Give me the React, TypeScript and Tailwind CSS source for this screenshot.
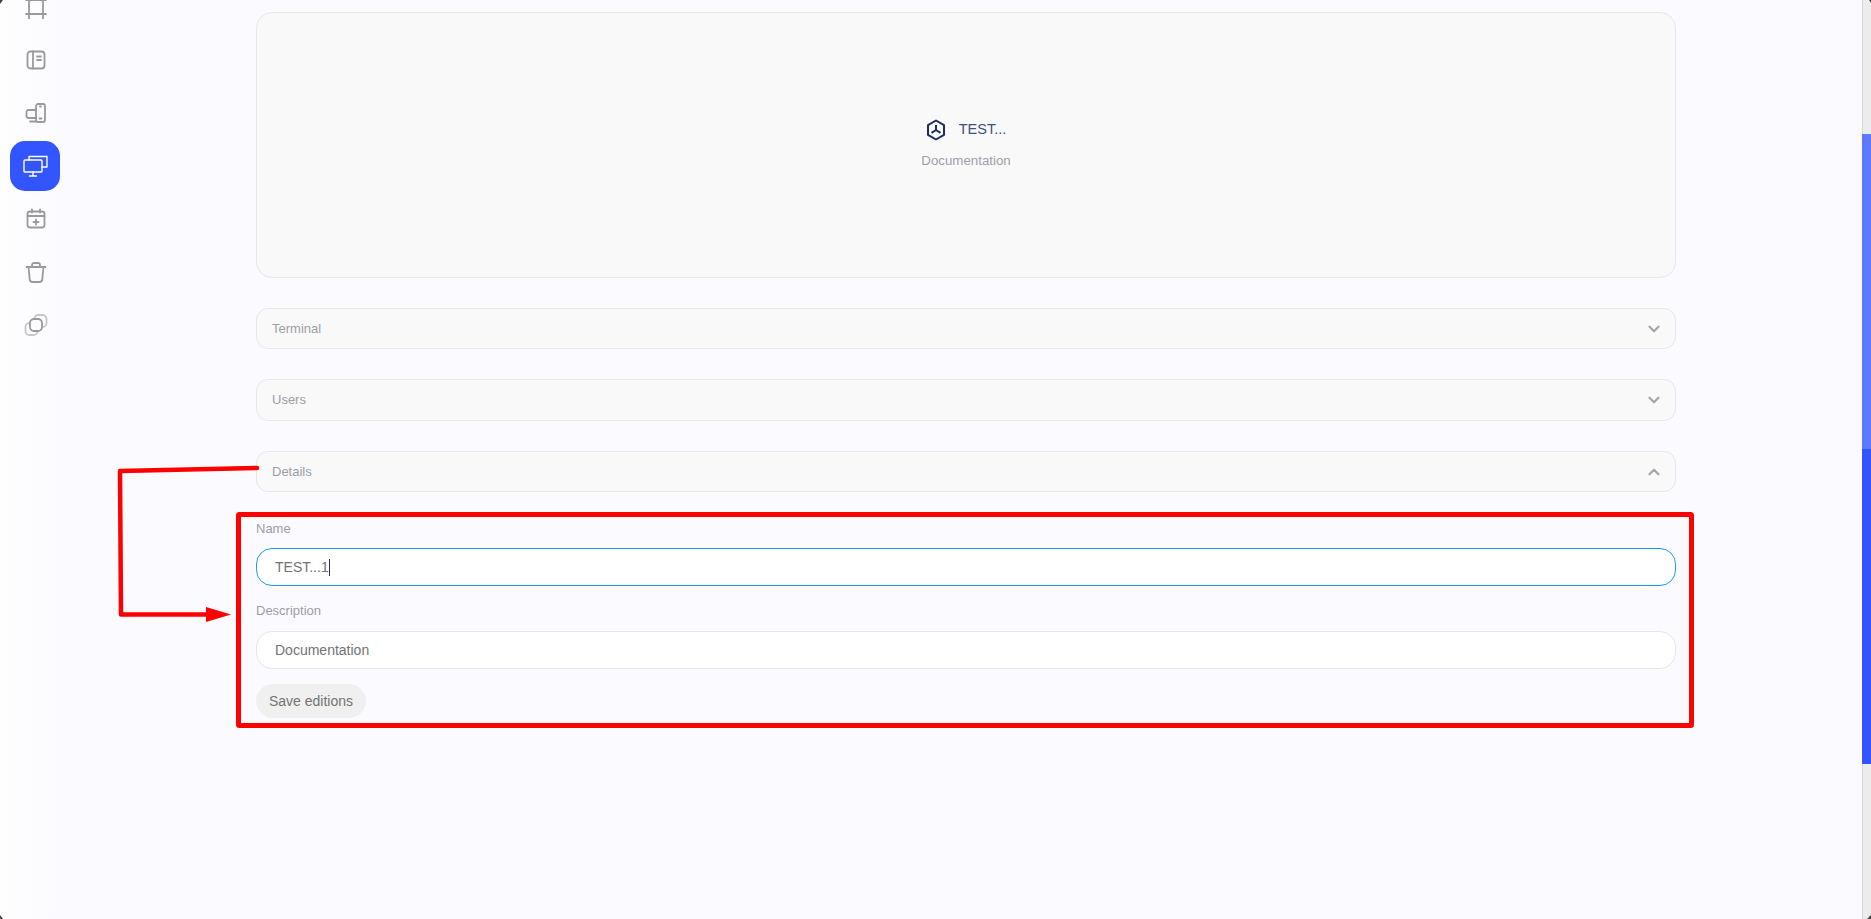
import { ChevronDown, ChevronUp } from 'lucide-react';

const FONT = "font-['Liberation_Sans',Arial,sans-serif]";

const sideIcons = [
  // frame
  <>
    <path d="M2 5h20M2 19h20M5 0v24M19 0v24" />
  </>,
  // book
  <>
    <rect x="3.500" y="3.500" width="17" height="17" rx="3" />
    <path d="M9 3.500v17M13 8.500h4M13 12h4" />
  </>,
  // monitor and phone
  <>
    <path d="M12 17H4.500a2 2 0 0 1-2-2v-4a2 2 0 0 1 2-2H12M6 20.500h6" />
    <rect x="12" y="3" width="9" height="18" rx="2" />
    <path d="M16 5.500h1M15.500 17.500h2" />
  </>,
  null,
  // calendar
  <>
    <rect x="3.500" y="4.500" width="17" height="16" rx="2.500" />
    <path d="M3.500 9h17M8 2.500v3M16 2.500v3M12 12.500v5M9.500 15h5" />
  </>,
  // trash
  <>
    <path d="M2.500 7h19M8 7V5a2 2 0 0 1 2-2h4a2 2 0 0 1 2 2v2" />
    <path d="M4.500 7l1.200 12a3 3 0 0 0 3 3h6.600a3 3 0 0 0 3-3l1.200-12" />
  </>,
  // overlapping squares
  <>
    <rect x="1.500" y="10" width="12" height="12" rx="4" opacity="0.55" />
    <rect x="10.500" y="2" width="12" height="12" rx="4" opacity="0.55" />
    <rect x="6" y="6" width="12" height="12" rx="4" fill="#fcfcff" />
  </>,
];

const Sidebar = () => (
  <aside className="w-[72px] shrink-0 -mt-[20px] h-[960px] flex flex-col items-center bg-gradient-to-r from-[#fefeff] to-[#fbfbff]">
    {sideIcons.map((icon, i) =>
      icon ? (
        <div key={i} className="h-[53px] w-full flex items-center justify-center">
          <svg width="24" height="24" viewBox="0 0 24 24" fill="none" stroke="#9a9a9a" strokeWidth="1.800" strokeLinecap="round" strokeLinejoin="round">
            {icon}
          </svg>
        </div>
      ) : (
        <div key={i} className="h-[53px] w-full flex items-center justify-center pr-[3px]">
          <div className="w-[50px] h-[50px] rounded-[15px] bg-[#3355ff] flex items-center justify-center">
            <svg width="26" height="26" viewBox="0 0 26 26" fill="none" stroke="#ffffff" strokeWidth="1.400" strokeLinecap="round" strokeLinejoin="round">
              <rect x="2" y="7" width="18" height="12" rx="1" />
              <path d="M7 7V3.500h18V14h-5M11 19v3M7.500 23h7" />
            </svg>
          </div>
        </div>
      )
    )}
  </aside>
);

const Accordion = ({ label, open, className }: { label: string; open?: boolean; className: string }) => (
  <div className={`${className} rounded-xl border border-[#e8e8ec] bg-[#f9f9f9] flex items-center justify-between pl-[15px] pr-[12px]`}>
    <span className="text-[13px] text-[#9d9da5]">{label}</span>
    {open ? (
      <ChevronUp size={18} strokeWidth={3} className="text-[#a5a5ad]" />
    ) : (
      <ChevronDown size={18} strokeWidth={3} className="text-[#a5a5ad]" />
    )}
  </div>
);

export default function App() {
  return (
    <div className={`relative h-[919px] overflow-hidden flex bg-[#fbfbff] ${FONT}`}>
      <Sidebar />

      <main className="flex-1 pl-[184px] pr-[186px] pt-[12px]">
        <div className="h-[266px] rounded-2xl border border-[#e8e8ec] bg-[#f9f9f9] flex flex-col items-center justify-center">
          <div className="flex items-center gap-[13px] h-[24px] -mt-[1px]">
            <svg width="20" height="22" viewBox="0 0 20 22" fill="none" stroke="#1b2d5e" strokeWidth="2" strokeLinejoin="round">
              <path d="M10 1.500l8 4.600v9.800l-8 4.600-8-4.600V6.100z" />
              <path d="M10 11V6M10 11l-4.500 2.800M10 11l4.500 2.800" />
            </svg>
            <span className="text-[14.500px] text-[#414f7c]">TEST...</span>
          </div>
          <span className="mt-[9px] text-[13.300px] text-[#9f9fa9]">Documentation</span>
        </div>

        <div className="mt-[30px] flex flex-col gap-[30px]">
          <Accordion label="Terminal" className="h-[41px]" />
          <Accordion label="Users" className="h-[42px]" />
          <Accordion label="Details" open className="h-[41px]" />
        </div>

        <div className="flex flex-col items-start">
          <label className="mt-[29px] h-[16px] leading-[16px] text-[13px] text-[#9d9da5]">Name</label>
          <div className="mt-[11px] h-[38px] w-full rounded-[16px] border border-[#1a9cf0] bg-white flex items-center px-[18px] text-[14px] text-[#737373]">
            TEST...1
            <span className="w-px h-[17px] bg-[#333333]" />
          </div>
          <label className="mt-[17px] h-[16px] leading-[16px] text-[13px] text-[#9d9da5]">Description</label>
          <input
            readOnly
            value="Documentation"
            className="mt-[12px] h-[38px] w-full rounded-[16px] border border-[#e6e6ea] bg-white px-[18px] text-[14px] text-[#737373] outline-none"
          />
          <button className="mt-[15px] h-[34px] w-[110px] rounded-full bg-[#f0f0f0] text-[14px] text-[#737373]">
            Save editions
          </button>
        </div>
      </main>

      {/* scrollbar */}
      <div className="w-[9px] shrink-0 bg-[#ececec] border-l border-[#d8d8d8] flex flex-col">
        <div className="h-[134px]" />
        <div className="h-[315px] -ml-px bg-[#5e78ff]" />
        <div className="h-[315px] -ml-px bg-[#3355ff]" />
      </div>

      {/* red annotation drawn over the page */}
      <svg className="absolute inset-0 pointer-events-none" width="1871" height="919" fill="none">
        <rect x="238.500" y="514.500" width="1453" height="211" rx="1" stroke="#ff0000" strokeWidth="5" />
        <path d="M257 468L120 471L121 614.500H206" stroke="#ff0000" strokeWidth="4.500" strokeLinejoin="round" strokeLinecap="round" />
        <path d="M206 607L231 614.500L206 622z" fill="#ff0000" />
        {/* window corners */}
        <path d="M0 0h3L0 4z" fill="#444444" />
        <path d="M0 919v-4l3 4z" fill="#444444" />
        <path d="M1871 919v-4l-4 4z" fill="#444444" />
        <path d="M1871 0v3l-2-3z" fill="#444444" />
      </svg>
    </div>
  );
}
